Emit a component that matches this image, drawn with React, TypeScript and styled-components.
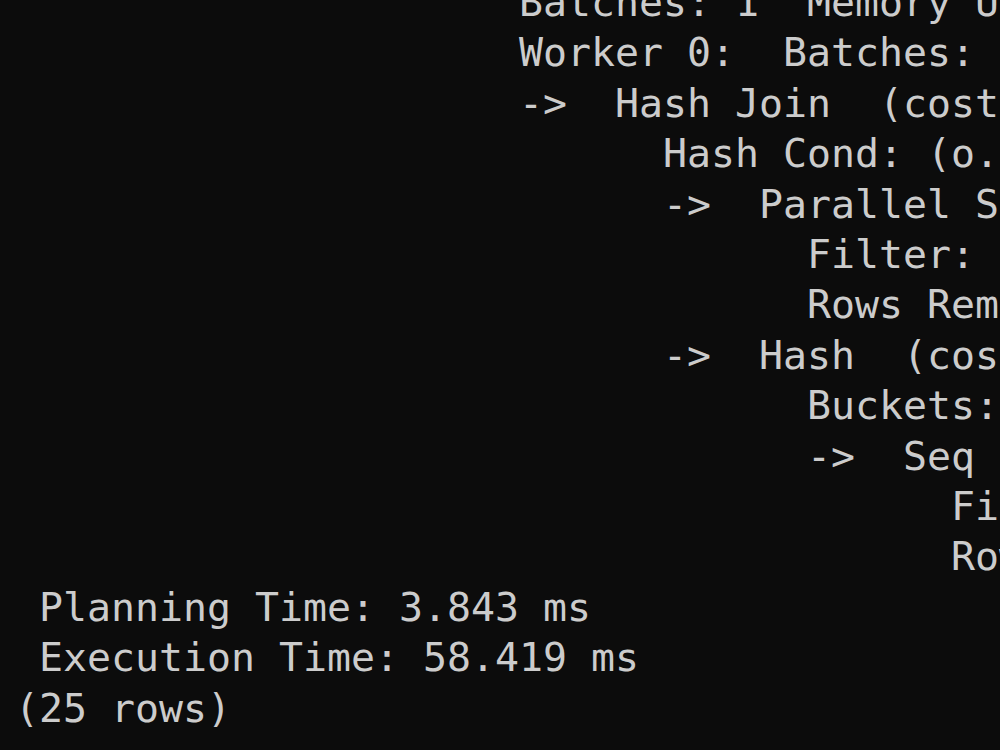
import React from "react";
import styled, { createGlobalStyle } from "styled-components";

const Global = createGlobalStyle`
  html, body {
    margin: 0;
    padding: 0;
    background: #0c0c0c;
    overflow: hidden;
  }
  #root {
    width: 1000px;
    height: 750px;
    overflow: hidden;
    background: #0c0c0c;
  }
`;

const Terminal = styled.div`
  display: flex;
  flex-direction: column;
  margin-top: -23px;
  padding-left: 15px;
  width: 1000px;
  height: 773px;
  box-sizing: border-box;
  overflow: hidden;
  background: #0c0c0c;
  color: #cccccc;
  font-family: "DejaVu Sans Mono", "Liberation Mono", monospace;
  font-size: 39.86px;
  line-height: 50.4px;
`;

const Line = styled.div<{ $indent: number }>`
  white-space: pre;
  padding-left: ${(p) => p.$indent}ch;
`;

const lines: { indent: number; text: string }[] = [
  { indent: 21, text: "Batches: 1  Memory Usage: 40kB" },
  { indent: 21, text: "Worker 0:  Batches: 1  Memory Usage: 40kB" },
  { indent: 21, text: "->  Hash Join  (cost=31.40..2456.20 rows=1250 width=48) (actual time=0.512..38.216 rows=1042 loops=2)" },
  { indent: 27, text: "Hash Cond: (o.customer_id = c.id)" },
  { indent: 27, text: "->  Parallel Seq Scan on orders o  (cost=0.00..2381.00 rows=14706 width=24)" },
  { indent: 33, text: "Filter: (created_at >= '2024-01-01'::date)" },
  { indent: 33, text: "Rows Removed by Filter: 18230" },
  { indent: 27, text: "->  Hash  (cost=25.15..25.15 rows=500 width=28) (actual time=0.402..0.403 rows=500 loops=2)" },
  { indent: 33, text: "Buckets: 1024  Batches: 1  Memory Usage: 52kB" },
  { indent: 33, text: "->  Seq Scan on customers c  (cost=0.00..25.15 rows=500 width=28)" },
  { indent: 39, text: "Filter: (active = true)" },
  { indent: 39, text: "Rows Removed by Filter: 112" },
  { indent: 0, text: " Planning Time: 3.843 ms" },
  { indent: 0, text: " Execution Time: 58.419 ms" },
  { indent: 0, text: "(25 rows)" },
];

export default function App() {
  return (
    <>
      <Global />
      <Terminal>
        {lines.map((l, i) => (
          <Line key={i} $indent={l.indent}>
            {l.text}
          </Line>
        ))}
      </Terminal>
    </>
  );
}
